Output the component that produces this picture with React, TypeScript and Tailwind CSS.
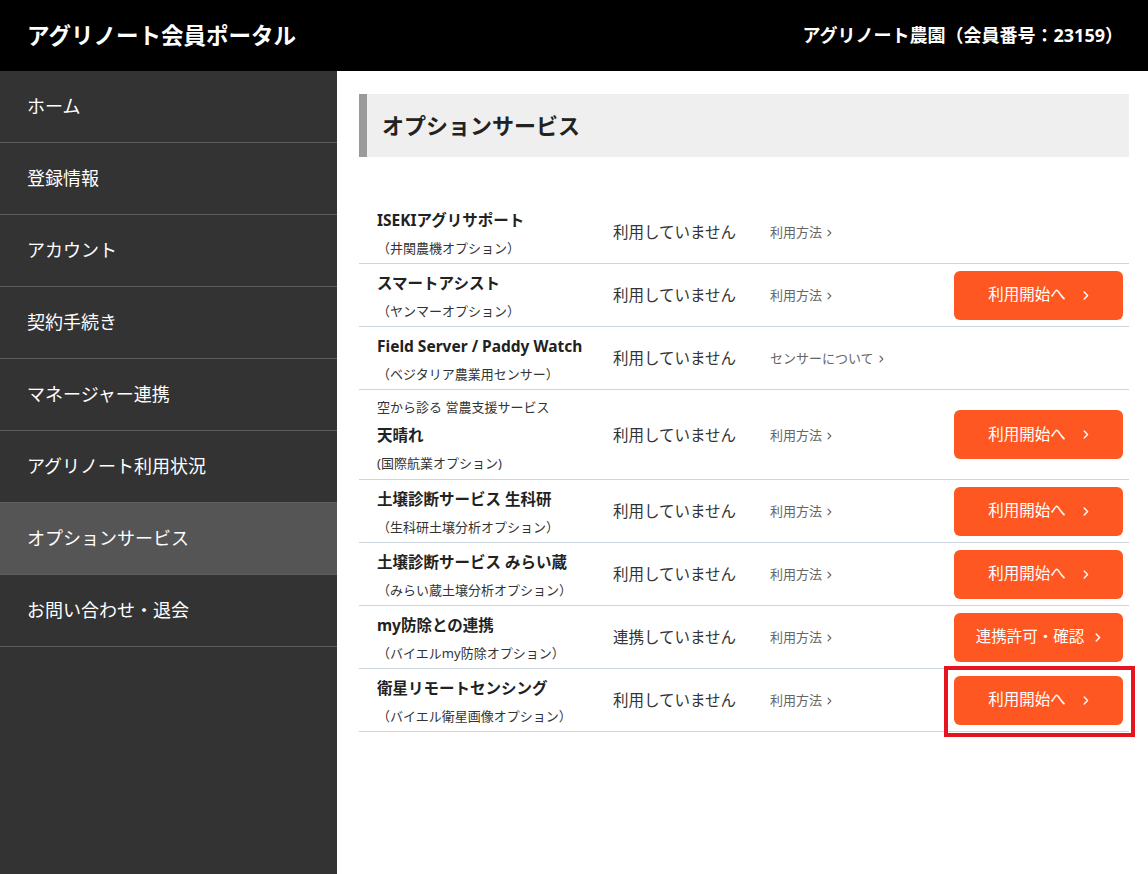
import React from "react";

const FONT = { fontFamily: '"Noto Sans", "Noto Sans CJK JP", sans-serif' };

type Row = {
  pre?: string;
  name: string;
  sub: string;
  status: string;
  link: string;
  button?: string;
  highlight?: boolean;
};

const rows: Row[] = [
  { name: "ISEKIアグリサポート", sub: "（井関農機オプション）", status: "利用していません", link: "利用方法" },
  { name: "スマートアシスト", sub: "（ヤンマーオプション）", status: "利用していません", link: "利用方法", button: "利用開始へ" },
  { name: "Field Server / Paddy Watch", sub: "（ベジタリア農業用センサー）", status: "利用していません", link: "センサーについて" },
  { pre: "空から診る 営農支援サービス", name: "天晴れ", sub: "(国際航業オプション)", status: "利用していません", link: "利用方法", button: "利用開始へ" },
  { name: "土壌診断サービス 生科研", sub: "（生科研土壌分析オプション）", status: "利用していません", link: "利用方法", button: "利用開始へ" },
  { name: "土壌診断サービス みらい蔵", sub: "（みらい蔵土壌分析オプション）", status: "利用していません", link: "利用方法", button: "利用開始へ" },
  { name: "my防除との連携", sub: "（バイエルmy防除オプション）", status: "連携していません", link: "利用方法", button: "連携許可・確認" },
  { name: "衛星リモートセンシング", sub: "（バイエル衛星画像オプション）", status: "利用していません", link: "利用方法", button: "利用開始へ", highlight: true },
];

const nav = ["ホーム", "登録情報", "アカウント", "契約手続き", "マネージャー連携", "アグリノート利用状況", "オプションサービス", "お問い合わせ・退会"];

function Chevron({ className }: { className?: string }) {
  return (
    <svg className={className} width="6" height="9" viewBox="0 0 6 9" fill="none">
      <path d="M1.2 1 L4.6 4.5 L1.2 8" stroke="currentColor" strokeWidth="1.4" strokeLinecap="round" strokeLinejoin="round" />
    </svg>
  );
}

function ActionButton({ label, highlight }: { label: string; highlight?: boolean }) {
  const short = label === "利用開始へ";
  return (
    <div className="relative">
      <button className="flex h-[49px] w-[169px] items-center justify-center rounded-[6px] bg-[#ff5722] text-[15.5px] text-white">
        <span>{label}</span>
        <Chevron className={short ? "ml-[17px]" : "ml-[11px]"} />
      </button>
      {highlight && (
        <div className="pointer-events-none absolute -left-[10px] -right-[12px] -top-[10px] -bottom-[12px] border-[4px] border-[#e5141f]" />
      )}
    </div>
  );
}

export default function App() {
  return (
    <div className="flex min-h-[874px] flex-col bg-white" style={FONT}>
      <header className="flex h-[71px] items-center justify-between bg-black pl-[27px] pr-[25px] text-white">
        <h1 className="text-[22.5px] font-bold">アグリノート会員ポータル</h1>
        <div className="text-[18px] font-bold">アグリノート農園（会員番号：23159）</div>
      </header>
      <div className="flex flex-1">
        <aside className="w-[337px] shrink-0 bg-[#333333]">
          {nav.map((item) => (
            <div
              key={item}
              className={`flex h-[72px] items-center border-b border-[#5e5e5e] pl-[27px] text-[18px] text-white ${item === "オプションサービス" ? "bg-[#555555]" : ""}`}
            >
              {item}
            </div>
          ))}
        </aside>
        <main className="flex-1 pl-[22px] pr-[19px] pt-[23px]">
          <div className="flex h-[63px] items-center border-l-[8px] border-[#9a9a9a] bg-[#efefef] pl-[15px]">
            <h2 className="text-[22px] font-bold text-[#222]">オプションサービス</h2>
          </div>
          <div className="mt-[44px]">
            {rows.map((r, i) => (
              <div key={i} className="flex items-center border-b border-[#ccd4dd]">
                <div className={`w-[254px] shrink-0 pl-[18px] ${r.pre ? "pt-[3px] pb-[2px]" : "pt-[5px]"}`}>
                  {r.pre && <div className="text-[13px] leading-[28px] text-[#333]">{r.pre}</div>}
                  <div className="text-[15.5px] font-bold leading-[28px] text-[#222]">{r.name}</div>
                  <div className={`text-[13px] text-[#333] ${r.pre ? "leading-[28px]" : "leading-[29px]"}`}>{r.sub}</div>
                </div>
                <div className="w-[157px] shrink-0 pt-[2px] text-[15.5px] text-[#333]">{r.status}</div>
                <div className="flex flex-1 items-center pt-[2px] text-[13px] text-[#666]">
                  <span>{r.link}</span>
                  <Chevron className="ml-[5px] h-[8px] w-[5px]" />
                </div>
                <div className="w-[175px] shrink-0 pr-[6px]">
                  {r.button && <ActionButton label={r.button} highlight={r.highlight} />}
                </div>
              </div>
            ))}
          </div>
        </main>
      </div>
    </div>
  );
}
